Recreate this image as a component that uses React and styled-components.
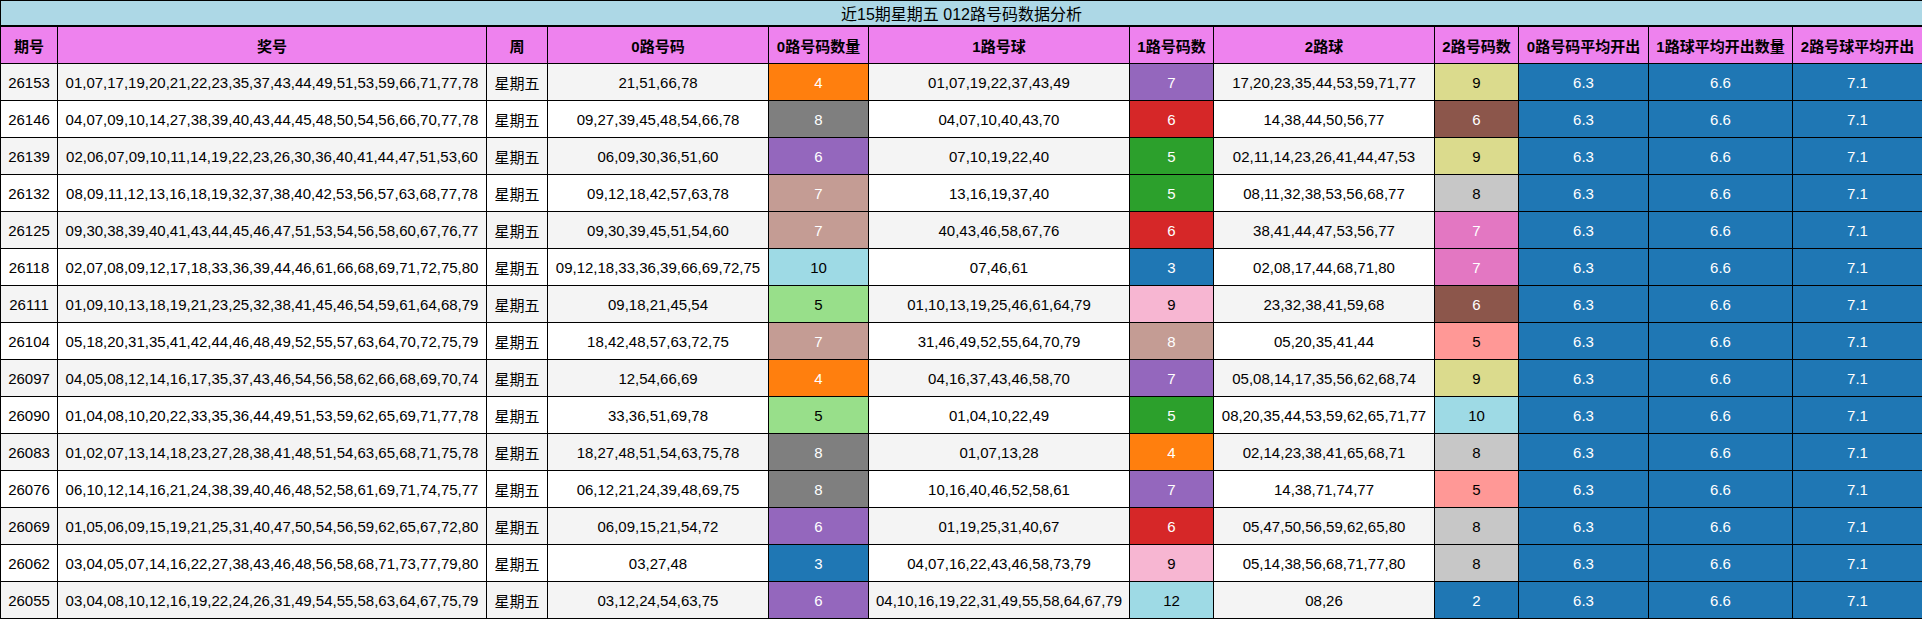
import React from 'react';
import styled, { createGlobalStyle } from 'styled-components';

const GlobalStyle = createGlobalStyle`
  body {
    margin: 0;
    background: #fff;
    font-family: "Liberation Sans", "Noto Sans CJK SC", sans-serif;
  }
`;

const Table = styled.table`
  width: 1922px;
  border-collapse: collapse;
  table-layout: fixed;
  font-size: 15px;
  color: #000;
`;

const TitleCell = styled.th`
  height: 24px;
  padding: 0;
  background: #add8e6;
  border: 1px solid #000;
  border-bottom: 2px solid #000;
  font-size: 16px;
  font-weight: 400;
  text-align: center;
`;

const HeadCell = styled.th`
  height: 36px;
  padding: 0;
  background: #ee82ee;
  border: 1px solid #000;
  font-weight: 700;
  text-align: center;
  white-space: nowrap;
`;

const Row = styled.tr`
  background: ${(p) => (p.$odd ? '#f4f4f4' : '#fff')};
`;

const Cell = styled.td`
  height: 36px;
  padding: 0;
  border: 1px solid #000;
  text-align: center;
  white-space: nowrap;
`;

const ColorCell = styled(Cell)`
  background: ${(p) => p.$bg};
  color: ${(p) => (p.$dark ? '#fff' : '#000')};
`;

const widths = [57, 429, 61, 221, 100, 261, 84, 221, 84, 130, 144, 130];

const headers = [
  '期号', '奖号', '周', '0路号码', '0路号码数量', '1路号球', '1路号码数',
  '2路球', '2路号码数', '0路号码平均开出', '1路球平均开出数量', '2路号球平均开出',
];

const C = {
  blue: '#1f77b4',
  orange: '#ff7f0e',
  green: '#2ca02c',
  lgreen: '#98df8a',
  red: '#d62728',
  salmon: '#ff9896',
  purple: '#9467bd',
  brown: '#8c564b',
  lbrown: '#c49c94',
  pink: '#e377c2',
  lpink: '#f7b6d2',
  gray: '#7f7f7f',
  lgray: '#c7c7c7',
  olive: '#dbdb8d',
  cyan: '#9edae5',
};

const isDark = (hex) => {
  const r = parseInt(hex.slice(1, 3), 16);
  const g = parseInt(hex.slice(3, 5), 16);
  const b = parseInt(hex.slice(5, 7), 16);
  return 0.299 * r + 0.587 * g + 0.114 * b < 175;
};

const rows = [
  ['26153', '01,07,17,19,20,21,22,23,35,37,43,44,49,51,53,59,66,71,77,78', '21,51,66,78', [4, C.orange], '01,07,19,22,37,43,49', [7, C.purple], '17,20,23,35,44,53,59,71,77', [9, C.olive]],
  ['26146', '04,07,09,10,14,27,38,39,40,43,44,45,48,50,54,56,66,70,77,78', '09,27,39,45,48,54,66,78', [8, C.gray], '04,07,10,40,43,70', [6, C.red], '14,38,44,50,56,77', [6, C.brown]],
  ['26139', '02,06,07,09,10,11,14,19,22,23,26,30,36,40,41,44,47,51,53,60', '06,09,30,36,51,60', [6, C.purple], '07,10,19,22,40', [5, C.green], '02,11,14,23,26,41,44,47,53', [9, C.olive]],
  ['26132', '08,09,11,12,13,16,18,19,32,37,38,40,42,53,56,57,63,68,77,78', '09,12,18,42,57,63,78', [7, C.lbrown], '13,16,19,37,40', [5, C.green], '08,11,32,38,53,56,68,77', [8, C.lgray]],
  ['26125', '09,30,38,39,40,41,43,44,45,46,47,51,53,54,56,58,60,67,76,77', '09,30,39,45,51,54,60', [7, C.lbrown], '40,43,46,58,67,76', [6, C.red], '38,41,44,47,53,56,77', [7, C.pink]],
  ['26118', '02,07,08,09,12,17,18,33,36,39,44,46,61,66,68,69,71,72,75,80', '09,12,18,33,36,39,66,69,72,75', [10, C.cyan], '07,46,61', [3, C.blue], '02,08,17,44,68,71,80', [7, C.pink]],
  ['26111', '01,09,10,13,18,19,21,23,25,32,38,41,45,46,54,59,61,64,68,79', '09,18,21,45,54', [5, C.lgreen], '01,10,13,19,25,46,61,64,79', [9, C.lpink], '23,32,38,41,59,68', [6, C.brown]],
  ['26104', '05,18,20,31,35,41,42,44,46,48,49,52,55,57,63,64,70,72,75,79', '18,42,48,57,63,72,75', [7, C.lbrown], '31,46,49,52,55,64,70,79', [8, C.lbrown], '05,20,35,41,44', [5, C.salmon]],
  ['26097', '04,05,08,12,14,16,17,35,37,43,46,54,56,58,62,66,68,69,70,74', '12,54,66,69', [4, C.orange], '04,16,37,43,46,58,70', [7, C.purple], '05,08,14,17,35,56,62,68,74', [9, C.olive]],
  ['26090', '01,04,08,10,20,22,33,35,36,44,49,51,53,59,62,65,69,71,77,78', '33,36,51,69,78', [5, C.lgreen], '01,04,10,22,49', [5, C.green], '08,20,35,44,53,59,62,65,71,77', [10, C.cyan]],
  ['26083', '01,02,07,13,14,18,23,27,28,38,41,48,51,54,63,65,68,71,75,78', '18,27,48,51,54,63,75,78', [8, C.gray], '01,07,13,28', [4, C.orange], '02,14,23,38,41,65,68,71', [8, C.lgray]],
  ['26076', '06,10,12,14,16,21,24,38,39,40,46,48,52,58,61,69,71,74,75,77', '06,12,21,24,39,48,69,75', [8, C.gray], '10,16,40,46,52,58,61', [7, C.purple], '14,38,71,74,77', [5, C.salmon]],
  ['26069', '01,05,06,09,15,19,21,25,31,40,47,50,54,56,59,62,65,67,72,80', '06,09,15,21,54,72', [6, C.purple], '01,19,25,31,40,67', [6, C.red], '05,47,50,56,59,62,65,80', [8, C.lgray]],
  ['26062', '03,04,05,07,14,16,22,27,38,43,46,48,56,58,68,71,73,77,79,80', '03,27,48', [3, C.blue], '04,07,16,22,43,46,58,73,79', [9, C.lpink], '05,14,38,56,68,71,77,80', [8, C.lgray]],
  ['26055', '03,04,08,10,12,16,19,22,24,26,31,49,54,55,58,63,64,67,75,79', '03,12,24,54,63,75', [6, C.purple], '04,10,16,19,22,31,49,55,58,64,67,79', [12, C.cyan], '08,26', [2, C.blue]],
];

const means = ['6.3', '6.6', '7.1'];

const CountCell = ({ value }) => (
  <ColorCell $bg={value[1]} $dark={isDark(value[1])}>
    {value[0]}
  </ColorCell>
);

export default function App() {
  return (
    <>
      <GlobalStyle />
      <Table>
        <colgroup>
          {widths.map((w, i) => (
            <col key={i} style={{ width: w }} />
          ))}
        </colgroup>
        <thead>
          <tr>
            <TitleCell colSpan={12}>近15期星期五 012路号码数据分析</TitleCell>
          </tr>
          <tr>
            {headers.map((h) => (
              <HeadCell key={h}>{h}</HeadCell>
            ))}
          </tr>
        </thead>
        <tbody>
          {rows.map((r, i) => (
            <Row key={r[0]} $odd={i % 2 === 0}>
              <Cell>{r[0]}</Cell>
              <Cell>{r[1]}</Cell>
              <Cell>星期五</Cell>
              <Cell>{r[2]}</Cell>
              <CountCell value={r[3]} />
              <Cell>{r[4]}</Cell>
              <CountCell value={r[5]} />
              <Cell>{r[6]}</Cell>
              <CountCell value={r[7]} />
              {means.map((m) => (
                <ColorCell key={m} $bg={C.blue} $dark>
                  {m}
                </ColorCell>
              ))}
            </Row>
          ))}
        </tbody>
      </Table>
    </>
  );
}
